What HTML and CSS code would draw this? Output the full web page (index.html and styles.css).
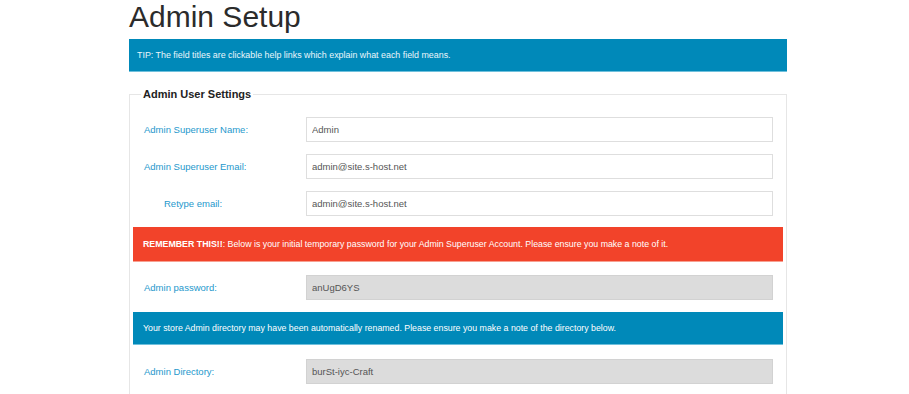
FILE: index.html
```html
<!DOCTYPE html>
<html>
<head>
<meta charset="utf-8">
<title>Admin Setup</title>
<link rel="stylesheet" href="styles.css">
</head>
<body>
<div class="page">
  <h1 class="title">Admin Setup</h1>
  <div class="tip">TIP: The field titles are clickable help links which explain what each field means.</div>
  <fieldset class="box">
    <legend class="legend">Admin User Settings</legend>
    <div class="row row-first">
      <a class="label" href="#">Admin Superuser Name:</a>
      <input class="field" type="text" value="Admin">
    </div>
    <div class="row">
      <a class="label" href="#">Admin Superuser Email:</a>
      <input class="field" type="text" value="admin@site.s-host.net">
    </div>
    <div class="row">
      <a class="label label-indent" href="#">Retype email:</a>
      <input class="field" type="text" value="admin@site.s-host.net">
    </div>
    <div class="alert alert-red"><strong>REMEMBER THIS!!</strong>: Below is your initial temporary password for your Admin Superuser Account. Please ensure you make a note of it.</div>
    <div class="row row-after-red">
      <a class="label" href="#">Admin password:</a>
      <input class="field field-ro" type="text" value="anUgD6YS" readonly>
    </div>
    <div class="alert alert-blue">Your store Admin directory may have been automatically renamed. Please ensure you make a note of the directory below.</div>
    <div class="row row-after-blue">
      <a class="label" href="#">Admin Directory:</a>
      <input class="field field-ro" type="text" value="burSt-iyc-Craft" readonly>
    </div>
  </fieldset>
</div>
</body>
</html>
```
FILE: styles.css
```css
html, body {
  margin: 0;
  padding: 0;
  background: #ffffff;
  font-family: "Liberation Sans", Arial, sans-serif;
}
.page {
  width: 658px;
  margin-left: 129px;
}
.title {
  margin: 0;
  font-size: 30px;
  line-height: 34px;
  font-weight: normal;
  color: #2b2b2b;
}
.tip {
  margin-top: 5px;
  height: 32px;
  line-height: 32px;
  padding: 0 8px;
  background: #0089b9;
  border-bottom: 1px solid #6fc0dc;
  color: #eaf6fb;
  font-size: 8.9px;
}
.box {
  margin: 16px 0 0 0;
  padding: 0 3px 20px 3px;
  border: 1px solid #e6e6e6;
  min-width: 0;
}
.legend {
  margin-left: 8px;
  padding: 0 2px;
  font-size: 11px;
  font-weight: bold;
  color: #222222;
}
.row {
  display: flex;
  align-items: center;
  padding-left: 11px;
  padding-right: 10px;
  margin-top: 12px;
}
.row-first {
  margin-top: 17px;
}
.row-after-red {
  margin-top: 13px;
}
.row-after-blue {
  margin-top: 14px;
}
.label {
  width: 162px;
  flex: none;
  color: #1e98cc;
  font-size: 9.5px;
  text-decoration: none;
}
.label-indent {
  padding-left: 20px;
  width: 142px;
}
.field {
  flex: 1;
  box-sizing: border-box;
  height: 25px;
  margin: 0;
  padding: 0 5px;
  border: 1px solid #dedede;
  background: #ffffff;
  color: #555555;
  font-family: "Liberation Sans", Arial, sans-serif;
  font-size: 9.5px;
  outline: none;
}
.field-ro {
  background: #dcdcdc;
  border-color: #d2d2d2;
}
.alert {
  padding: 0 10px;
  color: #ffffff;
  font-size: 8.8px;
}
.alert-red {
  margin-top: 11px;
  height: 34px;
  line-height: 34px;
  background: #f2432a;
  border-bottom: 1px solid #f7a091;
}
.alert-blue {
  margin-top: 12px;
  height: 32px;
  line-height: 32px;
  background: #0089b9;
  border-bottom: 1px solid #6fc0dc;
}
```
